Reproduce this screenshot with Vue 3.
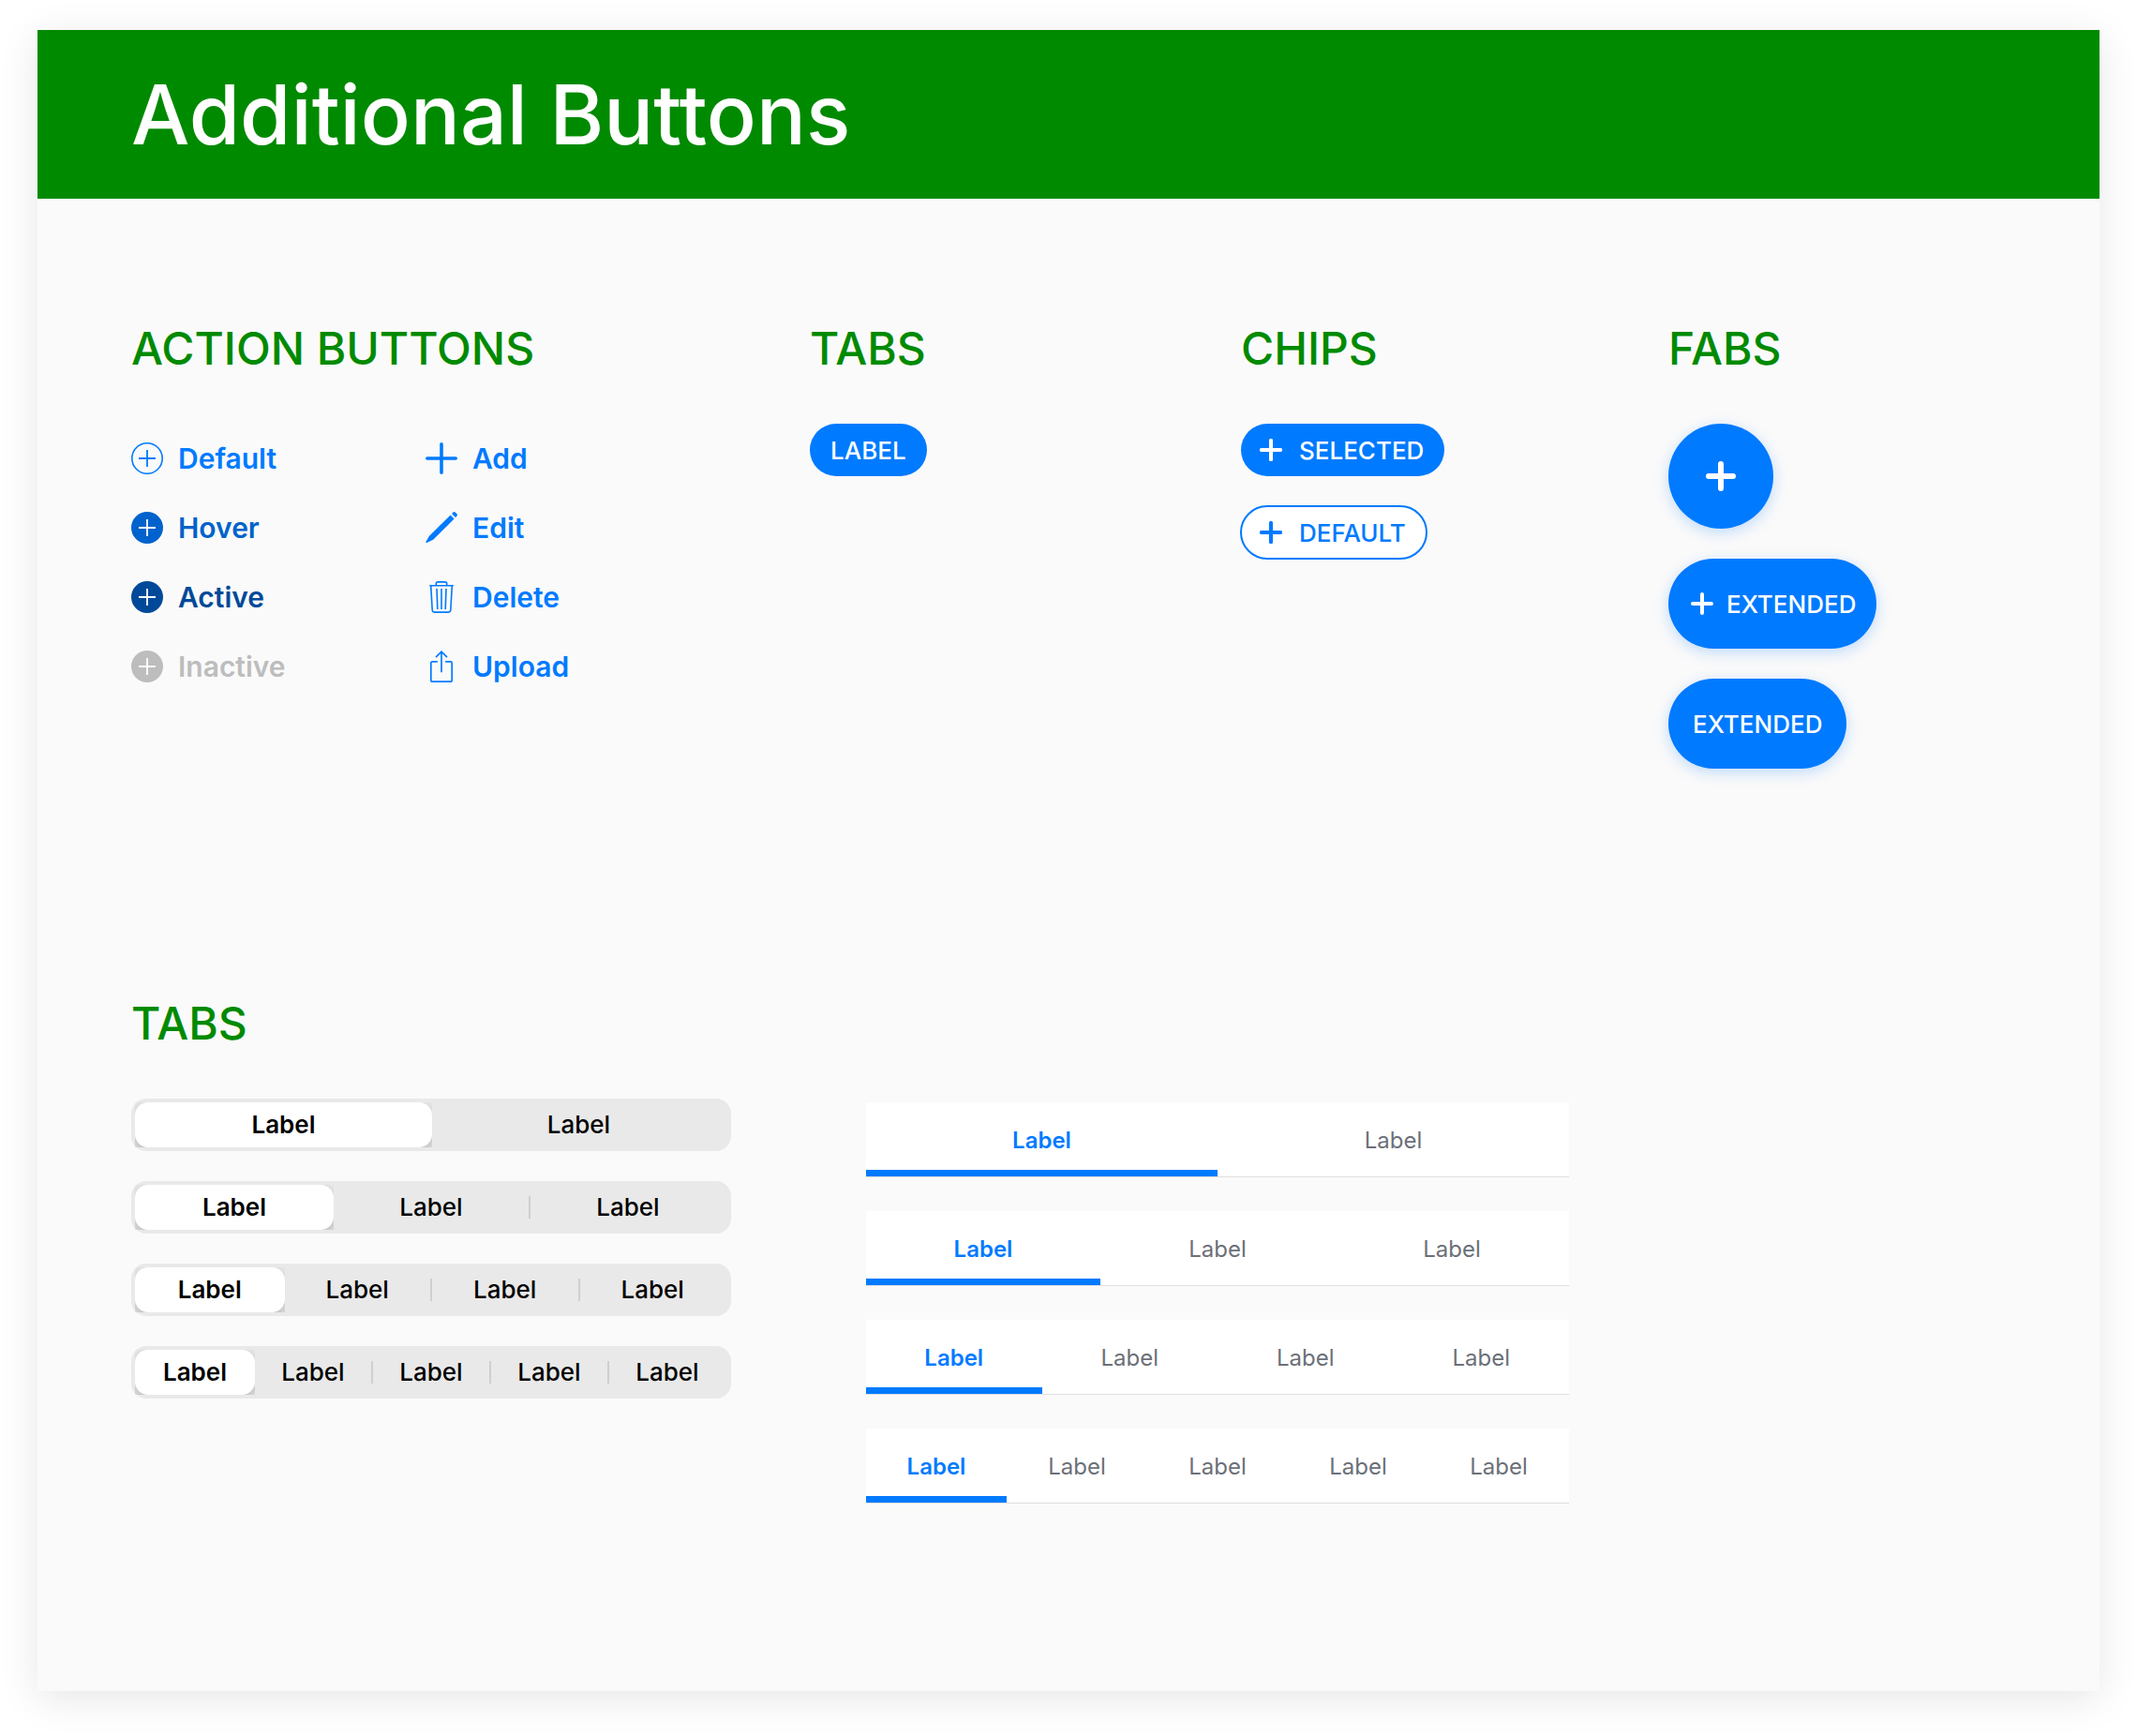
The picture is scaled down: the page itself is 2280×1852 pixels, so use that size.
<script setup>
import { reactive } from 'vue'

const states = [
  { label: 'Default', kind: 'default' },
  { label: 'Hover', kind: 'hover' },
  { label: 'Active', kind: 'active' },
  { label: 'Inactive', kind: 'inactive' },
]
const actions = [
  { label: 'Add', icon: 'add' },
  { label: 'Edit', icon: 'edit' },
  { label: 'Delete', icon: 'delete' },
  { label: 'Upload', icon: 'upload' },
]
const segments = reactive([2, 3, 4, 5].map((count) => ({ count, selected: 1 })))
const underlines = reactive([2, 3, 4, 5].map((count) => ({ count, selected: 1 })))
</script>

<template>
  <main class="card">
    <header class="banner">
      <h1>Additional Buttons</h1>
    </header>

    <div class="content">
      <div class="overview">
        <section>
          <h2>ACTION BUTTONS</h2>
          <div class="actions">
            <div class="action-list">
              <button
                v-for="s in states"
                :key="s.kind"
                type="button"
                class="action"
                :class="s.kind"
                :disabled="s.kind === 'inactive'"
              >
                <svg class="action-icon" viewBox="0 0 34 34" aria-hidden="true">
                  <circle v-if="s.kind === 'default'" cx="17" cy="17" r="16.2" fill="none" stroke="currentColor" stroke-width="1.6" />
                  <circle v-else cx="17" cy="17" r="17" fill="currentColor" />
                  <path
                    d="M17 8v18M8 17h18"
                    fill="none"
                    :stroke="s.kind === 'default' ? 'currentColor' : '#fff'"
                    stroke-width="1.8"
                  />
                </svg>
                {{ s.label }}
              </button>
            </div>
            <div class="action-list">
              <button v-for="a in actions" :key="a.icon" type="button" class="action">
                <svg class="action-icon" viewBox="0 0 34 34" fill="none" stroke="currentColor" aria-hidden="true">
                  <path v-if="a.icon === 'add'" d="M17 1.8v30.4M1.8 17h30.4" stroke-width="3.6" stroke-linecap="round" />
                  <g v-else-if="a.icon === 'edit'" fill="currentColor" stroke="none">
                    <path d="M26.6 3.4l4 4L8.200 29.800 1.400 33c-.8.3-1.300-.2-1-1l3.400-6z" />
                    <path d="M28 2l1.300-1.300c.9-.9 1.900-.7 2.600 0l1.400 1.400c.8.8.8 1.700 0 2.600L32 6z" />
                  </g>
                  <g v-else-if="a.icon === 'delete'" stroke-width="1.600">
                    <path d="M4.200 4.800h25.600M11.300 4.600V2.800c0-1.200.7-1.900 1.900-1.900h7.600c1.200 0 1.900.7 1.900 1.900v1.800" />
                    <path d="M5.700 5l1.500 25.800c.1 1.500.9 2.300 2.300 2.300h15c1.400 0 2.200-.8 2.300-2.300L28.300 5" />
                    <path d="M12 8l.8 22M17 8v22M22 8l-.8 22" />
                  </g>
                  <g v-else stroke-width="1.700">
                    <path d="M12.800 11.800H7.400c-1.100 0-1.600.6-1.600 1.600v18c0 1.100.5 1.700 1.600 1.700h19.200c1.100 0 1.600-.6 1.600-1.700v-18c0-1-.5-1.600-1.600-1.600h-5.400" />
                    <path d="M17 23.300V1.400M11 7.200l6-6 6 6" />
                  </g>
                </svg>
                {{ a.label }}
              </button>
            </div>
          </div>
        </section>

        <section>
          <h2>TABS</h2>
          <div class="stack">
            <button type="button" class="pill">LABEL</button>
          </div>
        </section>

        <section>
          <h2>CHIPS</h2>
          <div class="stack">
            <button type="button" class="pill chip" aria-pressed="true">
              <svg class="plus" viewBox="0 0 24 24" aria-hidden="true"><path d="M12 1.800v20.400M1.800 12h20.400" /></svg>
              SELECTED
            </button>
            <button type="button" class="pill chip outlined" aria-pressed="false">
              <svg class="plus" viewBox="0 0 24 24" aria-hidden="true"><path d="M12 1.800v20.400M1.800 12h20.400" /></svg>
              DEFAULT
            </button>
          </div>
        </section>

        <section>
          <h2>FABS</h2>
          <div class="stack">
            <button type="button" class="fab round" aria-label="Add">
              <svg class="plus-large" viewBox="0 0 32 32" aria-hidden="true"><path d="M16 3v26M3 16h26" /></svg>
            </button>
            <button type="button" class="fab with-icon">
              <svg class="plus" viewBox="0 0 24 24" aria-hidden="true"><path d="M12 2v20M2 12h20" /></svg>
              EXTENDED
            </button>
            <button type="button" class="fab">EXTENDED</button>
          </div>
        </section>
      </div>

      <section>
        <h2>TABS</h2>
        <div class="tab-columns">
          <div class="segment-list">
            <div v-for="row in segments" :key="row.count" class="segmented" role="tablist">
              <button
                v-for="n in row.count"
                :key="n"
                type="button"
                role="tab"
                class="segment"
                :class="{ selected: row.selected === n, divided: n > 1 && row.selected !== n && row.selected !== n - 1 }"
                :aria-selected="row.selected === n"
                @click="row.selected = n"
              >
                <span class="segment-face">Label</span>
              </button>
            </div>
          </div>
          <div class="underline-list">
            <div v-for="row in underlines" :key="row.count" class="underlined" role="tablist">
              <button
                v-for="n in row.count"
                :key="n"
                type="button"
                role="tab"
                class="line-tab"
                :class="{ selected: row.selected === n }"
                :aria-selected="row.selected === n"
                @click="row.selected = n"
              >
                Label
              </button>
            </div>
          </div>
        </div>
      </section>
    </div>
  </main>
</template>

<style>
body {
  margin: 0;
  background: #fff;
}
</style>

<style scoped>
.card {
  margin: 32px 40px 48px;
  background: #fafafa;
  box-shadow: 0 8px 40px rgba(0, 0, 0, 0.1);
  font-family: Inter, "Liberation Sans", sans-serif;
}

button {
  margin: 0;
  padding: 0;
  border: 0;
  background: none;
  font: inherit;
  color: inherit;
  cursor: pointer;
}

.banner {
  display: flex;
  align-items: center;
  min-height: 180px;
  padding: 0 100px;
  box-sizing: border-box;
  background: #008a00;
}

h1 {
  margin: 0;
  font-size: 88px;
  line-height: 112px;
  font-weight: 500;
  color: #fff;
}

h2 {
  margin: 0 0 48px;
  font-size: 48px;
  line-height: 64px;
  font-weight: 500;
  color: #008a00;
}

.content {
  display: flex;
  flex-direction: column;
  gap: 240px;
  padding: 128px 100px 200px;
}

.overview {
  display: grid;
  grid-template-columns: 724fr 460fr 456fr 360fr;
}

.actions {
  display: grid;
  grid-template-columns: 314fr 410fr;
  padding-top: 20px;
}

.action-list,
.stack {
  display: flex;
  flex-direction: column;
  align-items: flex-start;
}

.action-list {
  gap: 40px;
}

.stack {
  gap: 32px;
}

.action {
  display: flex;
  align-items: center;
  gap: 16px;
  font-size: 30px;
  line-height: 34px;
  font-weight: 600;
  color: #007aff;
}

.action.hover {
  color: #0062cc;
}

.action.active {
  color: #004999;
}

.action.inactive {
  color: #bdbdbd;
  cursor: default;
}

.action-icon {
  width: 34px;
  height: 34px;
}

.pill {
  display: flex;
  align-items: center;
  height: 56px;
  padding: 0 22px;
  border-radius: 28px;
  background: #007aff;
  font-size: 26px;
  font-weight: 500;
  color: #fff;
}

.chip {
  gap: 18px;
  padding: 0 22px 0 20px;
}

.chip.outlined {
  background: #fff;
  color: #007aff;
  outline: 2px solid #007aff;
  outline-offset: -1px;
}

.plus,
.plus-large {
  fill: none;
  stroke: currentColor;
  stroke-width: 4px;
  stroke-linecap: round;
}

.plus {
  width: 24px;
  height: 24px;
}

.plus-large {
  width: 32px;
  height: 32px;
  stroke-width: 6px;
}

.fab {
  display: flex;
  align-items: center;
  justify-content: center;
  gap: 14px;
  height: 96px;
  padding: 0 26px;
  border-radius: 48px;
  background: #007aff;
  box-shadow: 0 4px 16px rgba(0, 122, 255, 0.24);
  font-size: 26px;
  font-weight: 500;
  color: #fff;
}

.fab.round {
  width: 112px;
  height: 112px;
  padding: 0;
  border-radius: 50%;
}

.fab.with-icon {
  padding: 0 22px 0 24px;
}

.tab-columns {
  display: grid;
  grid-template-columns: 640fr 750fr 322fr;
  column-gap: 144px;
  align-items: start;
}

.segment-list {
  display: flex;
  flex-direction: column;
  gap: 32px;
}

.segmented {
  display: flex;
  align-items: center;
  height: 56px;
  padding: 0 6px 0 4px;
  box-sizing: border-box;
  border-radius: 16px;
  background: #e9e9e9;
}

.segment {
  flex: 1 1 0;
  height: 24px;
  font-size: 26px;
  line-height: 24px;
  font-weight: 500;
  color: #000;
}

.segment.divided {
  border-left: 2px solid #cfcfcf;
}

/* The raised face's shadow is cut off at the segment's square edges. */
.segment.selected {
  flex-basis: 4px;
  height: 48px;
  overflow: hidden;
  font-weight: 600;
}

.segment.selected .segment-face {
  display: block;
  line-height: 48px;
  border-radius: 14px;
  background: #fff;
  box-shadow: 0 6px 16px rgba(0, 0, 0, 0.24);
}

.underline-list {
  display: flex;
  flex-direction: column;
  gap: 36px;
  padding-top: 4px;
}

.underlined {
  display: flex;
  height: 80px;
  box-sizing: border-box;
  border-bottom: 1px solid #dedede;
  background: #fff;
}

.line-tab {
  flex: 1 1 0;
  padding: 2px 0 0;
  font-size: 24px;
  font-weight: 400;
  color: #6b7078;
}

.line-tab.selected {
  box-shadow: inset 0 -7px #007aff;
  font-weight: 600;
  color: #007aff;
}
</style>
